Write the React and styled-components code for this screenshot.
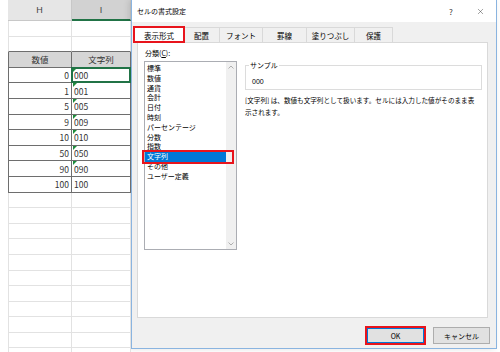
import React from "react"
import styled, { createGlobalStyle, css } from "styled-components"
import { X } from "lucide-react"

const GlobalStyle = createGlobalStyle`
  html, body {
    margin: 0;
    padding: 0;
    background: #fff;
  }
  body {
    width: 500px;
    height: 352px;
    overflow: hidden;
    font-family: "Noto Sans CJK JP", "Noto Sans", sans-serif;
    color: #1a1a1a;
  }
`

const Screen = styled.div`
  display: flex;
  width: 500px;
  height: 352px;
  overflow: hidden;
`

/* ---------- spreadsheet ---------- */

const Sheet = styled.div`
  width: 131px;
  flex: none;
  display: flex;
  flex-direction: column;
  padding-left: 8px;
  box-sizing: border-box;
  overflow: hidden;
`

const Row = styled.div`
  display: grid;
  grid-template-columns: 64px 59px;
  height: ${p => p.$h}px;
  flex: none;
`

const Cell = styled.div`
  box-sizing: border-box;
  position: relative;
  display: flex;
  align-items: center;
  justify-content: ${p => (p.$align === "right" ? "flex-end" : p.$align === "center" ? "center" : "flex-start")};
  padding: 0 2px;
  font-size: 8.5px;
  color: #333;
  background: ${p => (p.$fill ? "#d6d6d6" : "#fff")};
  border-left: ${p => (p.$first ? `1px solid ${p.$dark ? "#6e6e6e" : "#e2e2e2"}` : "none")};
  border-right: 1px solid ${p => (p.$dark ? "#6e6e6e" : "#e2e2e2")};
  border-bottom: 1px solid ${p => (p.$darkBottom ? "#6e6e6e" : "#e2e2e2")};

  ${p =>
    p.$flag &&
    css`
      &::before {
        content: "";
        position: absolute;
        left: 1px;
        top: 0;
        border-top: 4px solid #1e8c3c;
        border-right: 4px solid transparent;
      }
    `}

  ${p =>
    p.$selected &&
    css`
      &::after {
        content: "";
        position: absolute;
        inset: -1px -1px -1px -1px;
        border: 2px solid #217346;
      }
    `}
`

const HeadCell = styled.div`
  box-sizing: border-box;
  display: flex;
  align-items: center;
  justify-content: center;
  font-size: 9px;
  font-family: "Liberation Sans", sans-serif;
  color: #444;
  background: ${p => (p.$active ? "#d2d2d2" : "#e6e6e6")};
  border-right: 1px solid #c8c8c8;
  border-bottom: ${p => (p.$active ? "2px solid #217346" : "1px solid #c8c8c8")};
`

/* ---------- dialog ---------- */

const Dialog = styled.div`
  width: 366px;
  height: 349px;
  flex: none;
  box-sizing: border-box;
  display: flex;
  flex-direction: column;
  background: #f0f0f0;
  border: 1px solid #8ab4e0;
  border-top: none;
  box-shadow: -2px 0 6px rgba(0, 0, 0, 0.12);
  font-size: 7px;
  color: #000;
`

const TitleBar = styled.div`
  height: 22px;
  flex: none;
  display: flex;
  align-items: center;
  background: #fff;
  padding: 0 8px 0 5px;
  font-size: 7px;
`

const Title = styled.span`
  flex: 1;
`

const TitleButton = styled.span`
  width: ${p => p.$w}px;
  display: flex;
  align-items: center;
  justify-content: center;
  color: #333;
  font-size: 8px;
  margin-left: ${p => p.$gap || 0}px;
`

const TabStrip = styled.div`
  height: 20px;
  flex: none;
  display: flex;
  align-items: flex-end;
  padding-left: 2px;
`

const Tab = styled.div`
  width: ${p => p.$w}px;
  height: 15px;
  box-sizing: border-box;
  display: flex;
  align-items: center;
  justify-content: center;
  font-size: 7.5px;
  background: ${p => (p.$active ? "#fff" : "#f0f0f0")};
  border: 1px solid #d9d9d9;
  border-bottom: none;
  margin-left: -1px;

  &:first-child {
    margin-left: 0;
  }

  ${p =>
    p.$active &&
    css`
      position: relative;
      z-index: 1;
      outline: 2px solid #e8141c;
      outline-offset: -1px;
    `}
`

const Panel = styled.div`
  height: 276px;
  flex: none;
  box-sizing: border-box;
  margin: 0 8px 0 5px;
  background: #fff;
  border: 1px solid #d9d9d9;
  padding: 6px 5px 0 6px;
  display: flex;
  gap: 8px;
`

const LeftColumn = styled.div`
  width: 93px;
  flex: none;
  display: flex;
  flex-direction: column;
`

const Label = styled.div`
  height: 12px;
  line-height: 9px;
  padding-left: 1px;

  u {
    text-decoration: underline;
  }
`

const ListBox = styled.div`
  height: 189px;
  box-sizing: border-box;
  border: 1px solid #abadb3;
  display: flex;
`

const List = styled.div`
  flex: 1;
  padding: 2px 0 0 0;
`

const Item = styled.div`
  position: relative;
  height: 9.8px;
  line-height: 9.8px;
  padding-left: 2px;
  font-size: 7px;
  white-space: nowrap;

  ${p =>
    p.$selected &&
    css`
      background: #0078d7;
      color: #fff;

      &::after {
        content: "";
        position: absolute;
        left: -3px;
        right: -8px;
        top: -2px;
        bottom: -2px;
        border: 2px solid #e8141c;
        z-index: 2;
      }
    `}
`

const ScrollBar = styled.div`
  width: 10px;
  flex: none;
  background: #f0f0f0;
  display: flex;
  flex-direction: column;
  justify-content: space-between;
  align-items: center;
  padding: 3px 0;
  color: #a6a6a6;
`

const RightColumn = styled.div`
  flex: 1;
  display: flex;
  flex-direction: column;
`

const Group = styled.fieldset`
  margin: 12px 0 0;
  padding: 0 6px 0 3px;
  border: 1px solid #dcdcdc;
  min-width: 0;
`

const Legend = styled.legend`
  padding: 0 1px;
  font-size: 7px;
  line-height: 8px;
`

const SampleValue = styled.div`
  margin: 8px 0 2px;
  line-height: 10px;
  padding-left: 3px;
  font-size: 7px;
  font-family: "Liberation Sans", sans-serif;
`

const Description = styled.p`
  margin: 4px 0 0;
  font-size: 6.6px;
  line-height: 12px;
  white-space: nowrap;
`

const Footer = styled.div`
  height: 30px;
  flex: none;
  box-sizing: border-box;
  display: flex;
  justify-content: flex-end;
  align-items: flex-start;
  gap: 7px;
  padding: 8px 6px 0 0;
`

const RedFrame = styled.div`
  display: flex;
  border: 2px solid #e8141c;
`

const Button = styled.div`
  width: 57px;
  height: ${p => (p.$default ? 15 : 17)}px;
  box-sizing: border-box;
  display: flex;
  align-items: center;
  justify-content: center;
  background: #e1e1e1;
  border: 1px solid ${p => (p.$default ? "#0078d7" : "#adadad")};
  margin-top: ${p => (p.$default ? 0 : 1)}px;
  font-size: 7px;
`

const Chevron = ({ up }) => (
  <svg width="6" height="4" viewBox="0 0 6 4">
    <path d={up ? "M0.5 3.5 L3 1 L5.5 3.5" : "M0.5 0.5 L3 3 L5.5 0.5"} fill="none" stroke="currentColor" strokeWidth="0.9" />
  </svg>
)

const data = [
  ["0", "000"],
  ["1", "001"],
  ["5", "005"],
  ["9", "009"],
  ["10", "010"],
  ["50", "050"],
  ["90", "090"],
  ["100", "100"],
]

const categories = [
  "標準",
  "数値",
  "通貨",
  "会計",
  "日付",
  "時刻",
  "パーセンテージ",
  "分数",
  "指数",
  "文字列",
  "その他",
  "ユーザー定義",
]

const tabs = [
  ["表示形式", 50],
  ["配置", 37],
  ["フォント", 44],
  ["罫線", 45],
  ["塗りつぶし", 49],
  ["保護", 39],
]

const ROW = 15.6

const App = () => {
  const blankAfter = Array.from({ length: 12 })

  return (
    <Screen>
      <GlobalStyle />
      <Sheet>
        <Row $h={21}>
          <HeadCell>H</HeadCell>
          <HeadCell $active>I</HeadCell>
        </Row>
        <Row $h={ROW}>
          <Cell $first />
          <Cell />
        </Row>
        <Row $h={ROW}>
          <Cell $first $darkBottom />
          <Cell $darkBottom />
        </Row>
        <Row $h={ROW}>
          <Cell $first $dark $darkBottom $fill $align="center">数値</Cell>
          <Cell $dark $darkBottom $fill $align="center">文字列</Cell>
        </Row>
        {data.map(([num, text], i) => (
          <Row $h={ROW} key={num}>
            <Cell $first $dark $darkBottom $align="right">{num}</Cell>
            <Cell $dark $darkBottom $flag={text !== num} $selected={i === 0}>
              {text}
            </Cell>
          </Row>
        ))}
        {blankAfter.map((_, i) => (
          <Row $h={ROW} key={i}>
            <Cell $first />
            <Cell />
          </Row>
        ))}
      </Sheet>

      <Dialog>
        <TitleBar>
          <Title>セルの書式設定</Title>
          <TitleButton $w={10}>?</TitleButton>
          <TitleButton $w={16} $gap={16}>
            <X size={9} strokeWidth={1.2} />
          </TitleButton>
        </TitleBar>

        <TabStrip>
          {tabs.map(([name, w], i) => (
            <Tab key={name} $w={w} $active={i === 0}>
              {name}
            </Tab>
          ))}
        </TabStrip>

        <Panel>
          <LeftColumn>
            <Label>
              分類(<u>C</u>):
            </Label>
            <ListBox>
              <List>
                {categories.map(c => (
                  <Item key={c} $selected={c === "文字列"}>
                    {c}
                  </Item>
                ))}
              </List>
              <ScrollBar>
                <Chevron up />
                <Chevron />
              </ScrollBar>
            </ListBox>
          </LeftColumn>

          <RightColumn>
            <Group>
              <Legend>サンプル</Legend>
              <SampleValue>000</SampleValue>
            </Group>
            <Description>
              [文字列] は、数値も文字列として扱います。セルには入力した値がそのまま表
              <br />
              示されます。
            </Description>
          </RightColumn>
        </Panel>

        <Footer>
          <RedFrame>
            <Button $default>OK</Button>
          </RedFrame>
          <Button>キャンセル</Button>
        </Footer>
      </Dialog>
    </Screen>
  )
}

export default App
